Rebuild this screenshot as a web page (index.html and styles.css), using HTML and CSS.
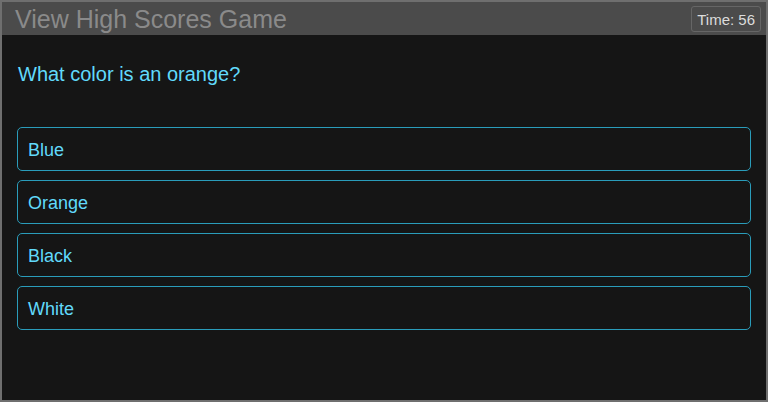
FILE: index.html
```html
<!DOCTYPE html>
<html>
<head>
<meta charset="utf-8">
<link rel="stylesheet" href="styles.css">
</head>
<body>
<div class="app">
  <header class="bar">
    <span class="title">View High Scores Game</span>
    <span class="timer">Time: 56</span>
  </header>
  <main class="content">
    <p class="question">What color is an orange?</p>
    <div class="answers">
      <button class="answer">Blue</button>
      <button class="answer">Orange</button>
      <button class="answer">Black</button>
      <button class="answer">White</button>
    </div>
  </main>
</div>
</body>
</html>
```
FILE: styles.css
```css
html, body {
  margin: 0;
  padding: 0;
  background: #151515;
}
.app {
  box-sizing: border-box;
  width: 768px;
  height: 402px;
  border: 2px solid #6f6f6f;
  background: #151515;
  font-family: "Liberation Sans", Arial, sans-serif;
  display: flex;
  flex-direction: column;
}
.bar {
  box-sizing: border-box;
  height: 33px;
  background: #4b4b4b;
  display: flex;
  align-items: center;
  justify-content: space-between;
  padding: 1px 5px 0 13px;
}
.title {
  color: #8a8a8a;
  font-size: 25px;
  line-height: 29px;
}
.timer {
  color: #dcdcdc;
  font-size: 15px;
  line-height: 17px;
  border: 1px solid #666;
  border-radius: 3px;
  padding: 4px 5px 3px;
  margin-top: -1px;
}
.content {
  padding: 0 15px;
}
.question {
  color: #61dafb;
  font-size: 20px;
  line-height: 23px;
  margin: 28px 0 41px 1px;
}
.answers {
  display: flex;
  flex-direction: column;
  gap: 9px;
}
.answer {
  box-sizing: border-box;
  height: 44px;
  text-align: left;
  background: transparent;
  border: 1px solid #2a9cba;
  border-radius: 5px;
  color: #61dafb;
  font-family: "Liberation Sans", Arial, sans-serif;
  font-size: 18px;
  padding: 3px 10px 0;
}
```
